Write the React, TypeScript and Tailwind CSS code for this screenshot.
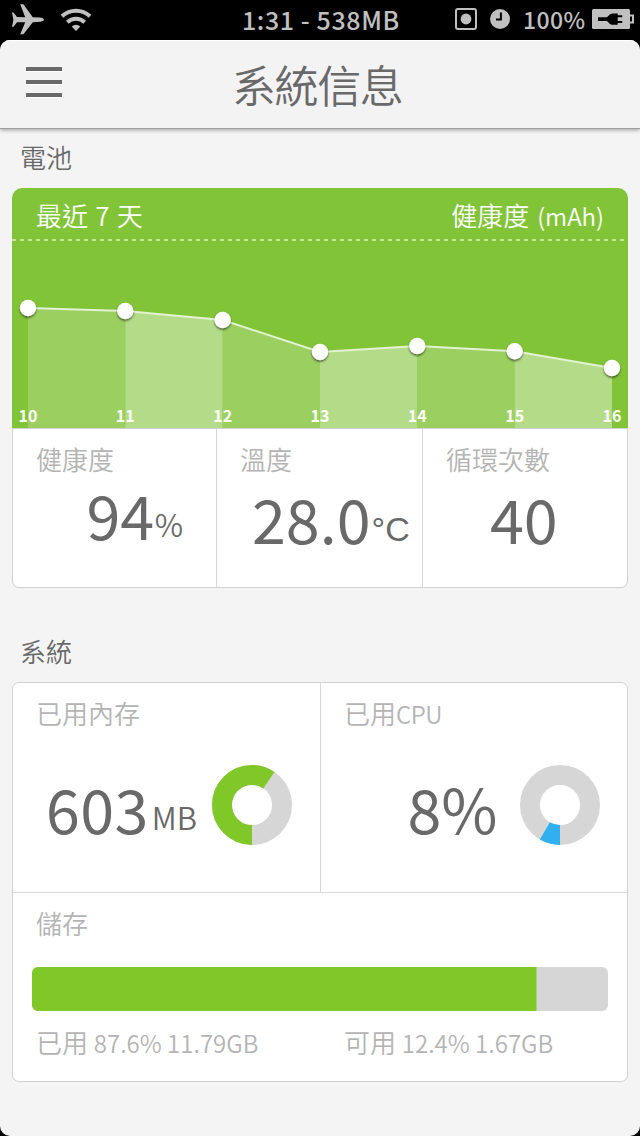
import type { ReactNode } from "react";

const POINTS = [
  { day: "10", x: 16, y: 308 },
  { day: "11", x: 113.3, y: 311 },
  { day: "12", x: 210.7, y: 320 },
  { day: "13", x: 308, y: 352 },
  { day: "14", x: 405.3, y: 346 },
  { day: "15", x: 502.7, y: 351.3 },
  { day: "16", x: 600, y: 368 },
].map((p) => ({ ...p, y: p.y - 242 }));

function StatusBar() {
  return (
    <div className="flex h-10 items-center text-[#c0c0c0]">
      <svg className="ml-3 h-[32px] w-8 shrink-0" viewBox="0 0 32 32" fill="currentColor">
        <path d="M0 8.5h1.5l3.5 4.6 8.2.1L8.2.3h3.2l9.4 12.9 7.2.4c2 .2 4 1.3 4 2.1s-2 1.9-4 2.1l-7.2.4-9.4 12.1H8.2l5-12.1-8.2.1-3.5 4.5H0l1.4-7.1z" />
      </svg>
      <svg className="ml-4 h-6 w-8 shrink-0" viewBox="0 0 32 24" fill="none" stroke="currentColor">
        <path d="M2 8.3a20.5 20.5 0 0 1 28 0" strokeWidth="4" />
        <path d="M7.3 14.2a13 13 0 0 1 17.4 0" strokeWidth="4" />
        <path d="M16 23l-4.3-4.5a6.2 6.2 0 0 1 8.6 0z" fill="currentColor" stroke="none" />
      </svg>
      <div className="ml-[150px] h-10 w-[164px] shrink-0 text-[25px] leading-[38px] font-medium tracking-[0.6px] whitespace-nowrap">1:31 - 538MB</div>
      <svg className="ml-[49px] h-6 w-[22px] shrink-0" viewBox="0 0 22 24" fill="none" stroke="currentColor" strokeWidth="2">
        <rect x="1" y="1" width="20" height="20" rx="2" />
        <circle cx="11" cy="11" r="5.4" fill="currentColor" stroke="none" />
      </svg>
      <svg className="ml-[13px] h-6 w-5 shrink-0" viewBox="0 0 20 24">
        <circle cx="10" cy="11" r="10" fill="currentColor" />
        <path d="M10.9 4.5v7.1H6" fill="none" stroke="black" strokeWidth="2" />
      </svg>
      <div className="ml-[13px] h-10 w-[69px] shrink-0 text-[23px] leading-[39px] font-medium tracking-[0.4px] whitespace-nowrap">100%</div>
      <svg className="h-6 w-[42px] shrink-0" viewBox="0 0 42 24">
        <rect x="0" y="1" width="38" height="20" rx="1.5" fill="currentColor" />
        <path d="M38 7.5h3v7h-3" fill="none" stroke="currentColor" strokeWidth="2" />
        <path d="M6 9.2h8.5c2-.6 2.7-3.8 6.4-3.8h4.8v1.8h4.5v2h-4.5v3.8h4.5v2h-4.5v1.8h-4.8c-3.7 0-4.4-3.2-6.4-3.8H6z" fill="black" />
      </svg>
    </div>
  );
}

function Chart() {
  return (
    <svg className="block h-[186px] w-full" viewBox="0 0 616 186">
      <defs>
        <filter id="dotShadow" x="-30%" y="-30%" width="160%" height="170%">
          <feDropShadow dx="0" dy="1.5" stdDeviation="1" floodColor="#000" floodOpacity="0.6" />
        </filter>
      </defs>
      {POINTS.slice(1).map((p, i) => {
        const q = POINTS[i];
        return (
          <polygon
            key={p.day}
            points={`${q.x},186 ${q.x},${q.y} ${p.x},${p.y} ${p.x},186`}
            fill={i % 2 ? "#b4dc88" : "#9bd060"}
          />
        );
      })}
      <polyline points={POINTS.map((p) => `${p.x},${p.y}`).join(" ")} fill="none" stroke="#e3f2d2" strokeWidth="2" />
      {POINTS.map((p) => (
        <g key={p.day}>
          <circle cx={p.x} cy={p.y} r="8.2" fill="white" filter="url(#dotShadow)" />
          <text x={p.x} y="180" textAnchor="middle" fill="white" className="text-[16px] font-bold">
            {p.day}
          </text>
        </g>
      ))}
    </svg>
  );
}

function Donut({ value, color }: { value: number; color: string }) {
  const len = 2 * Math.PI * 30;
  return (
    <svg className="size-20 shrink-0" viewBox="0 0 80 80" fill="none" strokeWidth="20">
      <circle cx="40" cy="40" r="30" stroke="#d6d6d6" />
      <circle cx="40" cy="40" r="30" stroke={color} strokeDasharray={`${len * value} ${len}`} transform="rotate(90 40 40)" />
    </svg>
  );
}

function Label({ children }: { children: ReactNode }) {
  return <div className="h-7 text-[26px] leading-7 font-[350] whitespace-nowrap text-[#b4b4b4]">{children}</div>;
}

export default function App() {
  return (
    <div className="h-[1136px] w-[640px] overflow-hidden bg-black font-['Noto_Sans_CJK_TC','Noto_Sans',sans-serif] text-[#696969]">
      <StatusBar />
      <div className="h-[1096px] overflow-hidden rounded-[10px] bg-[#f4f4f4]">
        <header className="flex h-[89px] items-start border-t border-b border-t-white border-b-[#a0a0a0] bg-[#f3f3f3] shadow-[0_1px_4px_rgba(0,0,0,0.35)]">
          <div className="mt-[26px] ml-[26px] flex w-9 flex-col gap-[9px]">
            <div className="h-1 bg-[#696969] shadow-[0_1px_0_white]" />
            <div className="h-1 bg-[#696969] shadow-[0_1px_0_white]" />
            <div className="h-1 bg-[#696969] shadow-[0_1px_0_white]" />
          </div>
          <h1 className="mt-[13px] ml-[170px] text-[44px] leading-[60px] font-[350] tracking-[-1.4px] whitespace-nowrap">系統信息</h1>
        </header>

        <h2 className="mt-[12px] mb-[15px] ml-5 h-8 text-[26px] leading-8 font-[350]">電池</h2>
        <section className="mx-3">
          <div className="h-60 overflow-hidden rounded-t-[10px] bg-[#82c438] text-white">
            <div className="flex h-[51px] justify-between px-6 text-[26px] leading-[54px] font-[350] whitespace-nowrap">
              <span className="[word-spacing:1.5px]">最近 7 天</span>
              <span className="[word-spacing:2px]">健康度 <span className="text-[24px]">(mAh)</span></span>
            </div>
            <div className="h-[2px] bg-[repeating-linear-gradient(90deg,#c9e6a9_0_4px,transparent_4px_8px)]" />
            <div className="h-px" />
            <Chart />
          </div>
          <div className="grid h-40 grid-cols-[204px_206px_1fr] overflow-hidden rounded-b-[7px] border border-[#d0d0d0] bg-white">
            <div className="border-r border-[#d8d8d8] pt-4 pl-[23px]">
              <Label>健康度</Label>
              <div className="mt-[11px] ml-[50.5px] flex h-[60px] leading-[60px]">
                <span className="text-[61px]">94</span>
                <span className="mt-[10px] ml-[0.5px] text-[31px] font-[350]">%</span>
              </div>
            </div>
            <div className="border-r border-[#d8d8d8] pt-4 pl-[23px]">
              <Label>溫度</Label>
              <div className="mt-[15px] ml-[12px] flex h-[60px] leading-[60px]">
                <span className="text-[61px]">28.0</span>
                <span className="mt-[11px] ml-px font-['Liberation_Sans',sans-serif] text-[34px]">°C</span>
              </div>
            </div>
            <div className="pt-4 pl-[23px]">
              <Label>循環次數</Label>
              <div className="mt-[15px] ml-[44px] h-[60px] text-[61px] leading-[60px]">40</div>
            </div>
          </div>
        </section>

        <h2 className="mt-[47px] mb-[15px] ml-5 h-8 text-[26px] leading-8 font-[350]">系統</h2>
        <section className="mx-3 h-[400px] overflow-hidden rounded-[7px] border border-[#d0d0d0] bg-white">
          <div className="grid h-[210px] grid-cols-[308px_1fr] border-b border-[#d8d8d8]">
            <div className="border-r border-[#d8d8d8] pt-4 pl-[23px]">
              <Label>已用內存</Label>
              <div className="mt-[38px] flex h-20">
                <div className="mt-[13px] ml-[10px] flex w-[166px] leading-[60px] whitespace-nowrap">
                  <span className="text-[61px] tracking-[0.4px]">603</span>
                  <span className="mt-[9px] ml-[3px] text-[31px] font-[350]">MB</span>
                </div>
                <Donut value={0.594} color="#80c728" />
              </div>
            </div>
            <div className="pt-4 pl-[23px]">
              <Label>已用<span className="text-[24px] tracking-[-0.5px]">CPU</span></Label>
              <div className="mt-[38px] flex h-20">
                <div className="mt-[13px] ml-[63.5px] w-[112.5px] text-[61px] leading-[60px] whitespace-nowrap">8%</div>
                <Donut value={0.084} color="#30b0f0" />
              </div>
            </div>
          </div>
          <div className="pt-4 pl-[23px]">
            <Label>儲存</Label>
          </div>
          <div className="mx-[19px] mt-[30px] flex h-11 overflow-hidden rounded-[6px] bg-[#d6d6d6]">
            <div className="w-[504px] bg-[#80c728]" />
            <div className="w-px bg-[#aacf80]" />
          </div>
          <div className="mt-[17px] grid grid-cols-[308px_1fr] pl-[23px]">
            <Label>已用 <span className="text-[24px]">87.6% 11.79GB</span></Label>
            <Label>可用 <span className="text-[24px]">12.4% 1.67GB</span></Label>
          </div>
        </section>
      </div>
    </div>
  );
}
